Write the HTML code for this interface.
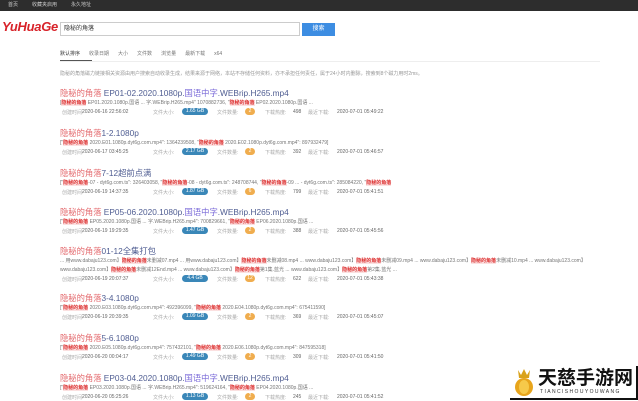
<!DOCTYPE html>
<html><head><meta charset="utf-8"><style>
*{margin:0;padding:0;box-sizing:border-box}
body{width:638px;height:400px;overflow:hidden;background:#fff;position:relative;font-family:"Liberation Sans","Noto Sans CJK SC",sans-serif;color:#555}
.a{position:absolute;white-space:nowrap}
.top{left:0;top:0;width:638px;height:11px;background:#2d2d2d;color:#ccc;font-size:5px;line-height:11px}
.logo{left:2px;top:19px;font-size:13px;font-weight:bold;font-style:italic;color:#d8232a;letter-spacing:-0.3px}
.inp{left:60px;top:22px;width:240px;height:14px;border:1px solid #ccc;font-size:6px;line-height:12px;padding-left:3px;color:#333}
.btn{left:302px;top:23px;width:33px;height:13px;background:#3d8de2;color:#fff;font-size:6px;line-height:13px;text-align:center}
.tabs{left:60px;top:50px;font-size:5px;color:#777}
.tabs span{margin-right:9px}
.ul{left:60px;top:60px;width:32px;height:1px;background:#555}
.hl{left:60px;top:61px;width:540px;height:1px;background:#eee}
.desc{left:60px;top:70px;font-size:5px;color:#999}
.t{font-size:8.3px;color:#4f5d92;left:60px}
.r{color:#e46a6e}
.p{color:#7a6ad8}
.l{font-size:5px;color:#777;left:60px}
.k{background:#fbe0e0;color:#d33;font-weight:bold}
.m{font-size:5px;color:#aaa;left:62px}
.m b{position:absolute;font-weight:normal;color:#666}
.bb{position:absolute;background:#3a87b8;color:#fff;border-radius:4px;height:7px;line-height:7px;font-size:5px;text-align:center;width:26px;top:-1px}
.ob{position:absolute;background:#f0ad4e;color:#fff;border-radius:4px;height:7px;line-height:7px;font-size:5px;text-align:center;width:10px;top:-1px}
</style></head><body>
<div class="a top"><span style="margin-left:8px">首页</span><span style="margin-left:14px">收藏夹启用</span><span style="margin-left:14px">永久地址</span></div>
<div class="a logo">YuHuaGe</div>
<div class="a inp">隐秘的角落</div>
<div class="a btn">搜索</div>
<div class="a tabs"><span style="color:#333">默认排序</span><span>收录日期</span><span>大小</span><span>文件数</span><span>浏览量</span><span>最新下载</span><span>x64</span></div>
<div class="a ul"></div><div class="a hl"></div>
<div class="a desc">隐秘的角落磁力链接相关资源由用户搜索自动收录生成，结果来源于网络，本站不存储任何资料，亦不承担任何责任，属于24小时内删除，搜索到8个磁力用时2ms。</div>

<div class="a t" style="top:87px"><span class="r">隐秘的角落</span> EP01-02.2020.1080p.<span class="p">国语中字</span>.WEBrip.H265.mp4</div>
<div class="a l" style="top:99px">[<span class="k">隐秘的角落</span> EP01.2020.1080p.国语 ... 字.WEBrip.H265.mp4" 1070882736, "<span class="k">隐秘的角落</span> EP02.2020.1080p.国语 ...</div>
<div class="a m" style="top:109px">创建时间:<b style="left:20px">2020-06-16 22:56:02</b><b style="left:91px;color:#aaa">文件大小:</b><span class="bb" style="left:120px">1.65 GB</span><b style="left:155px;color:#aaa">文件数量:</b><span class="ob" style="left:183px">2</span><b style="left:203px;color:#aaa">下载热度:</b><b style="left:231px">498</b><b style="left:246px;color:#aaa">最近下载:</b><b style="left:275px">2020-07-01 05:49:22</b></div>

<div class="a t" style="top:127px"><span class="r">隐秘的角落</span>1-2.1080p</div>
<div class="a l" style="top:139px">["<span class="k">隐秘的角落</span> 2020.E01.1080p.dyt6g.com.mp4": 1364239508, "<span class="k">隐秘的角落</span> 2020.E02.1080p.dyt6g.com.mp4": 897932479]</div>
<div class="a m" style="top:149px">创建时间:<b style="left:20px">2020-06-17 03:45:25</b><b style="left:91px;color:#aaa">文件大小:</b><span class="bb" style="left:120px">2.17 GB</span><b style="left:155px;color:#aaa">文件数量:</b><span class="ob" style="left:183px">2</span><b style="left:203px;color:#aaa">下载热度:</b><b style="left:231px">392</b><b style="left:246px;color:#aaa">最近下载:</b><b style="left:275px">2020-07-01 05:46:57</b></div>

<div class="a t" style="top:167px"><span class="r">隐秘的角落</span>7-12超前点满</div>
<div class="a l" style="top:179px">["<span class="k">隐秘的角落</span>-07 - dyt6g.com.ts": 326403058, "<span class="k">隐秘的角落</span>-08 - dyt6g.com.ts": 248708744, "<span class="k">隐秘的角落</span>-09 ... - dyt6g.com.ts": 285084220, "<span class="k">隐秘的角落</span></div>
<div class="a m" style="top:189px">创建时间:<b style="left:20px">2020-06-19 14:37:35</b><b style="left:91px;color:#aaa">文件大小:</b><span class="bb" style="left:120px">1.87 GB</span><b style="left:155px;color:#aaa">文件数量:</b><span class="ob" style="left:183px">6</span><b style="left:203px;color:#aaa">下载热度:</b><b style="left:231px">799</b><b style="left:246px;color:#aaa">最近下载:</b><b style="left:275px">2020-07-01 05:41:51</b></div>

<div class="a t" style="top:206px"><span class="r">隐秘的角落</span> EP05-06.2020.1080p.<span class="p">国语中字</span>.WEBrip.H265.mp4</div>
<div class="a l" style="top:218px">["<span class="k">隐秘的角落</span> EP05.2020.1080p.国语 ... 字.WEBrip.H265.mp4": 700829661, "<span class="k">隐秘的角落</span> EP06.2020.1080p.国语 ...</div>
<div class="a m" style="top:228px">创建时间:<b style="left:20px">2020-06-19 19:29:35</b><b style="left:91px;color:#aaa">文件大小:</b><span class="bb" style="left:120px">1.47 GB</span><b style="left:155px;color:#aaa">文件数量:</b><span class="ob" style="left:183px">2</span><b style="left:203px;color:#aaa">下载热度:</b><b style="left:231px">388</b><b style="left:246px;color:#aaa">最近下载:</b><b style="left:275px">2020-07-01 05:45:56</b></div>

<div class="a t" style="top:245px"><span class="r">隐秘的角落</span>01-12全集打包</div>
<div class="a l" style="top:257px">... 用www.dabaju123.com】<span class="k">隐秘的角落</span>未删减07.mp4 ... 用www.dabaju123.com】<span class="k">隐秘的角落</span>未删减08.mp4 ... www.dabaju123.com】<span class="k">隐秘的角落</span>未删减09.mp4 ... www.dabaju123.com】<span class="k">隐秘的角落</span>未删减10.mp4 ... www.dabaju123.com】</div>
<div class="a l" style="top:266px">www.dabaju123.com】<span class="k">隐秘的角落</span>未删减12End.mp4 ... www.dabaju123.com】<span class="k">隐秘的角落</span>第1集.蓝光 ... www.dabaju123.com】<span class="k">隐秘的角落</span>第2集.蓝光 ...</div>
<div class="a m" style="top:276px">创建时间:<b style="left:20px">2020-06-19 20:07:37</b><b style="left:91px;color:#aaa">文件大小:</b><span class="bb" style="left:120px">4.4 GB</span><b style="left:155px;color:#aaa">文件数量:</b><span class="ob" style="left:183px">12</span><b style="left:203px;color:#aaa">下载热度:</b><b style="left:231px">622</b><b style="left:246px;color:#aaa">最近下载:</b><b style="left:275px">2020-07-01 05:43:38</b></div>

<div class="a t" style="top:292px"><span class="r">隐秘的角落</span>3-4.1080p</div>
<div class="a l" style="top:304px">["<span class="k">隐秘的角落</span> 2020.E03.1080p.dyt6g.com.mp4": 492396099, "<span class="k">隐秘的角落</span> 2020.E04.1080p.dyt6g.com.mp4": 675411590]</div>
<div class="a m" style="top:314px">创建时间:<b style="left:20px">2020-06-19 20:39:35</b><b style="left:91px;color:#aaa">文件大小:</b><span class="bb" style="left:120px">1.09 GB</span><b style="left:155px;color:#aaa">文件数量:</b><span class="ob" style="left:183px">2</span><b style="left:203px;color:#aaa">下载热度:</b><b style="left:231px">369</b><b style="left:246px;color:#aaa">最近下载:</b><b style="left:275px">2020-07-01 05:45:07</b></div>

<div class="a t" style="top:332px"><span class="r">隐秘的角落</span>5-6.1080p</div>
<div class="a l" style="top:344px">["<span class="k">隐秘的角落</span> 2020.E05.1080p.dyt6g.com.mp4": 757432101, "<span class="k">隐秘的角落</span> 2020.E06.1080p.dyt6g.com.mp4": 847595318]</div>
<div class="a m" style="top:354px">创建时间:<b style="left:20px">2020-06-20 00:04:17</b><b style="left:91px;color:#aaa">文件大小:</b><span class="bb" style="left:120px">1.49 GB</span><b style="left:155px;color:#aaa">文件数量:</b><span class="ob" style="left:183px">2</span><b style="left:203px;color:#aaa">下载热度:</b><b style="left:231px">309</b><b style="left:246px;color:#aaa">最近下载:</b><b style="left:275px">2020-07-01 05:41:50</b></div>

<div class="a t" style="top:372px"><span class="r">隐秘的角落</span> EP03-04.2020.1080p.<span class="p">国语中字</span>.WEBrip.H265.mp4</div>
<div class="a l" style="top:384px">["<span class="k">隐秘的角落</span> EP03.2020.1080p.国语 ... 字.WEBrip.H265.mp4": 519624164, "<span class="k">隐秘的角落</span> EP04.2020.1080p.国语 ...</div>
<div class="a m" style="top:394px">创建时间:<b style="left:20px">2020-06-20 05:25:26</b><b style="left:91px;color:#aaa">文件大小:</b><span class="bb" style="left:120px">1.13 GB</span><b style="left:155px;color:#aaa">文件数量:</b><span class="ob" style="left:183px">2</span><b style="left:203px;color:#aaa">下载热度:</b><b style="left:231px">245</b><b style="left:246px;color:#aaa">最近下载:</b><b style="left:275px">2020-07-01 05:41:52</b></div>

<div class="a" style="left:510px;top:366px;width:128px;height:34px;background:#fff;border-right:2px solid #111;border-bottom:2px solid #111"></div>
<svg class="a" style="left:513px;top:367px" width="22" height="30" viewBox="0 0 22 30">
<path d="M5 3 L8 8 L11 2 L14 8 L17 3 L16 11 L6 11 Z" fill="#d9a21b"/>
<circle cx="11" cy="20" r="9" fill="#e8a51c"/>
<ellipse cx="11" cy="20" rx="5" ry="7" fill="#f6c94a"/>
</svg>
<div class="a" style="left:538px;top:366px;font-size:19px;font-weight:bold;color:#111;line-height:22px;font-family:'Noto Sans CJK SC',sans-serif">天慈手游网</div>
<div class="a" style="left:540px;top:389px;font-size:5px;color:#333;letter-spacing:1.4px">TIANCISHOUYOUWANG</div>
</body></html>
